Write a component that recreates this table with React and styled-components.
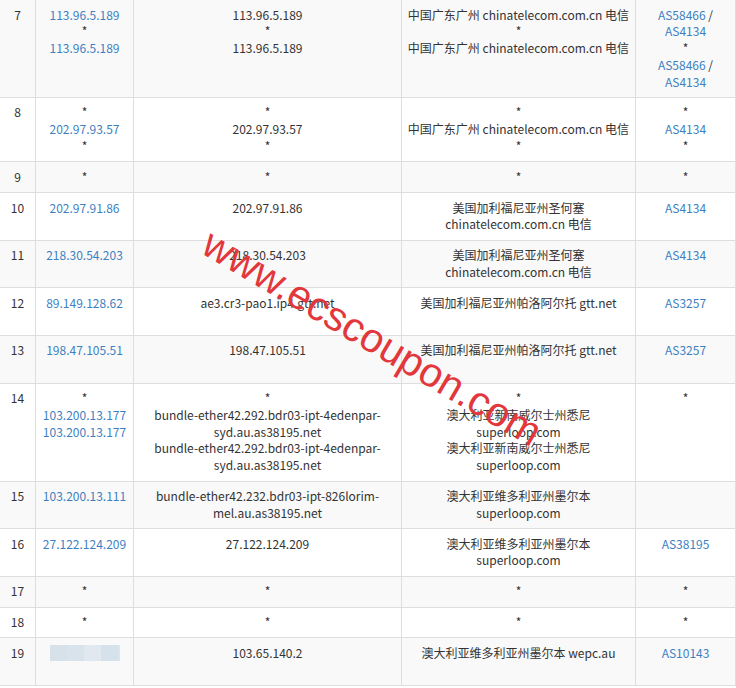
import React from "react";
import styled, { createGlobalStyle } from "styled-components";

const GlobalStyle = createGlobalStyle`
  html, body {
    margin: 0;
    padding: 0;
    background: #fff;
  }
  body {
    font-family: "Microsoft YaHei", "Noto Sans CJK SC", "Noto Sans", sans-serif;
  }
`;

const L = (text) => ({ text, link: true });
const BLUR = { blur: true };

const hops = [
  {
    hop: 7,
    ip: [L("113.96.5.189"), "*", L("113.96.5.189")],
    host: ["113.96.5.189", "*", "113.96.5.189"],
    geo: ["中国广东广州 chinatelecom.com.cn 电信", "*", "中国广东广州 chinatelecom.com.cn 电信"],
    asn: [[L("AS58466"), " /"], L("AS4134"), "*", [L("AS58466"), " /"], L("AS4134")],
  },
  {
    hop: 8,
    ip: ["*", L("202.97.93.57"), "*"],
    host: ["*", "202.97.93.57", "*"],
    geo: ["*", "中国广东广州 chinatelecom.com.cn 电信", "*"],
    asn: ["*", L("AS4134"), "*"],
  },
  { hop: 9, ip: ["*"], host: ["*"], geo: ["*"], asn: ["*"] },
  {
    hop: 10,
    ip: [L("202.97.91.86")],
    host: ["202.97.91.86"],
    geo: ["美国加利福尼亚州圣何塞", "chinatelecom.com.cn 电信"],
    asn: [L("AS4134")],
  },
  {
    hop: 11,
    ip: [L("218.30.54.203")],
    host: ["218.30.54.203"],
    geo: ["美国加利福尼亚州圣何塞", "chinatelecom.com.cn 电信"],
    asn: [L("AS4134")],
  },
  {
    hop: 12,
    ip: [L("89.149.128.62")],
    host: ["ae3.cr3-pao1.ip4.gtt.net", ""],
    geo: ["美国加利福尼亚州帕洛阿尔托 gtt.net"],
    asn: [L("AS3257")],
  },
  {
    hop: 13,
    ip: [L("198.47.105.51")],
    host: ["198.47.105.51", ""],
    geo: ["美国加利福尼亚州帕洛阿尔托 gtt.net"],
    asn: [L("AS3257")],
  },
  {
    hop: 14,
    ip: ["*", L("103.200.13.177"), L("103.200.13.177")],
    host: [
      "*",
      "bundle-ether42.292.bdr03-ipt-4edenpar-",
      "syd.au.as38195.net",
      "bundle-ether42.292.bdr03-ipt-4edenpar-",
      "syd.au.as38195.net",
    ],
    geo: ["*", "澳大利亚新南威尔士州悉尼", "superloop.com", "澳大利亚新南威尔士州悉尼", "superloop.com"],
    asn: ["*"],
  },
  {
    hop: 15,
    ip: [L("103.200.13.111")],
    host: ["bundle-ether42.232.bdr03-ipt-826lorim-", "mel.au.as38195.net"],
    geo: ["澳大利亚维多利亚州墨尔本", "superloop.com"],
    asn: [],
  },
  {
    hop: 16,
    ip: [L("27.122.124.209")],
    host: ["27.122.124.209"],
    geo: ["澳大利亚维多利亚州墨尔本", "superloop.com"],
    asn: [L("AS38195")],
  },
  { hop: 17, ip: ["*"], host: ["*"], geo: ["*"], asn: ["*"] },
  { hop: 18, ip: ["*"], host: ["*"], geo: ["*"], asn: ["*"] },
  {
    hop: 19,
    ip: [BLUR],
    host: ["103.65.140.2", ""],
    geo: ["澳大利亚维多利亚州墨尔本 wepc.au"],
    asn: [L("AS10143")],
  },
];

function Part({ part }) {
  if (typeof part === "string") return part;
  if (part.blur) return <Blur />;
  return <Link>{part.text}</Link>;
}

function Lines({ lines }) {
  return lines.map((line, i) => (
    <Line key={i}>
      {[].concat(line).map((p, j) => <Part key={j} part={p} />)}
    </Line>
  ));
}

export default function App() {
  return (
    <>
      <GlobalStyle />
      <Page>
        <Table>
          <colgroup>
            <Col $w={36} />
            <Col $w={98} />
            <Col $w={268} />
            <Col $w={234} />
            <Col $w={100} />
          </colgroup>
          <tbody>
            {hops.map((h) => (
              <Row key={h.hop} $striped={h.hop % 2 === 1}>
                <Cell>{h.hop}</Cell>
                <Cell><Lines lines={h.ip} /></Cell>
                <Cell><Lines lines={h.host} /></Cell>
                <Cell><Lines lines={h.geo} /></Cell>
                <Cell><Lines lines={h.asn} /></Cell>
              </Row>
            ))}
          </tbody>
        </Table>
        <Watermark>www.ecscoupon.com</Watermark>
      </Page>
    </>
  );
}

const Page = styled.div`
  position: relative;
  width: 736px;
  height: 688px;
  overflow: hidden;
`;

const Table = styled.table`
  width: 736px;
  margin: -1px 0 0 -1px;
  border-collapse: collapse;
  table-layout: fixed;
  font-size: 12px;
  line-height: 16.8px;
  color: #333;
`;

const Col = styled.col`
  width: ${(p) => p.$w}px;
`;

const Row = styled.tr`
  background: ${(p) => (p.$striped ? "#f9f9f9" : "#fff")};
`;

const Cell = styled.td`
  border: 1px solid #dedede;
  padding: 6.5px 4px;
  text-align: center;
  vertical-align: top;
  white-space: nowrap;
`;

const Line = styled.div`
  min-height: 16.8px;
`;

const Link = styled.span`
  color: #3d7fc1;
`;

const Blur = styled.span`
  display: inline-block;
  vertical-align: top;
  width: 70px;
  height: 16px;
  background: linear-gradient(
    90deg,
    #d6e1ea 0 17px,
    #d9e3ec 17px 34px,
    #e1e8ef 34px 51px,
    #d5e1eb 51px 68px,
    #d8e6f0 68px
  );
`;

const Watermark = styled.div`
  position: absolute;
  left: 372px;
  top: 338px;
  transform: translate(-50%, -50%) rotate(30.5deg);
  font-family: "Liberation Sans", Arial, sans-serif;
  font-size: 41px;
  line-height: 1;
  color: #e2373b;
  white-space: nowrap;
  pointer-events: none;
`;
